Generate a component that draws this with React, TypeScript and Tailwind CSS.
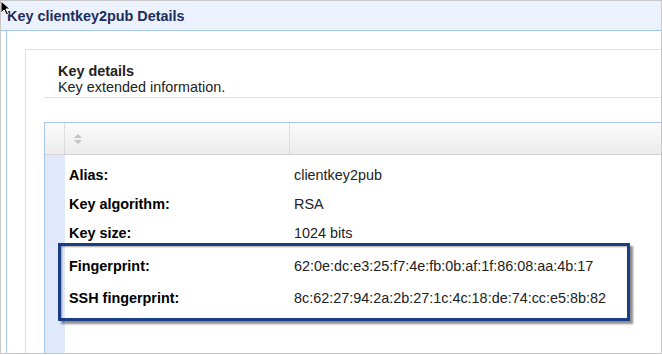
import React from "react";

const rows: { label: string; value: string; h: string }[] = [
  { label: "Alias:", value: "clientkey2pub", h: "h-[29px]" },
  { label: "Key algorithm:", value: "RSA", h: "h-[29px]" },
  { label: "Key size:", value: "1024 bits", h: "h-[33px]" },
  { label: "Fingerprint:", value: "62:0e:dc:e3:25:f7:4e:fb:0b:af:1f:86:08:aa:4b:17", h: "h-[32px]" },
  { label: "SSH fingerprint:", value: "8c:62:27:94:2a:2b:27:1c:4c:18:de:74:cc:e5:8b:82", h: "h-[32px]" },
];

export default function App() {
  return (
    <div
      className="relative w-[662px] h-[354px] overflow-hidden border border-[#c8c8c8] bg-white flex flex-col"
      style={{ fontFamily: '"Liberation Sans", Arial, sans-serif' }}
    >
      {/* header */}
      <div className="h-[30px] shrink-0 bg-[#ebf2fd] border-b border-[#a4c6f0] flex items-center pl-[6px]">
        <span className="text-[14.4px] leading-[16px] font-bold text-[#1c2d5c]">Key clientkey2pub Details</span>
      </div>

      {/* body panel */}
      <div className="flex-1 ml-[5px] border-l border-[#a9c8f0] pl-[18px] pt-[18px] flex flex-col min-h-0">
        {/* card */}
        <div className="flex-1 border-l border-t border-[#e0e0e0] pl-[18px] flex flex-col min-h-0">
          <div className="border-b border-[#e0e0e0] pl-[14px] pt-[13px] pb-[2px] text-[14.4px] leading-[16px] text-[#222]">
            <div className="font-bold">Key details</div>
            <div>Key extended information.</div>
          </div>

          {/* table */}
          <div className="relative mt-[24px] flex-1 border-t border-l border-[#a9c4eb] flex flex-col min-h-0">
            <div className="h-[32px] shrink-0 flex bg-gradient-to-b from-[#fbfbfb] to-[#ececec] border-b border-[#d4d4d4]">
              <div className="w-[20px] border-r border-dotted border-[#c8c8c8]" />
              <div className="w-[225px] border-r border-dotted border-[#c8c8c8] flex items-center pl-[9px]">
                <svg width="8" height="10" viewBox="0 0 8 10">
                  <path d="M4 0 L8 4 L0 4 Z" fill="#c4c4c4" />
                  <path d="M0 6 L8 6 L4 10 Z" fill="#c4c4c4" />
                </svg>
              </div>
              <div className="flex-1" />
            </div>
            <div className="flex-1 flex min-h-0">
              <div className="w-[20px] shrink-0 bg-[#dfe9fb]" />
              <div className="flex-1 pt-[12px] flex flex-col text-[14.4px] leading-[16px]">
                {rows.map((r) => (
                  <div key={r.label} className={`${r.h} shrink-0 flex items-start`}>
                    <div className="w-[225px] pl-[4px] font-bold text-black">{r.label}</div>
                    <div className="pl-[4px] text-[#222]">{r.value}</div>
                  </div>
                ))}
              </div>
            </div>
          </div>
        </div>
      </div>

      {/* highlight annotation */}
      <div className="absolute left-[57px] top-[242px] w-[572px] h-[78px] border-[3px] border-[#1a3e86] shadow-[3px_3px_2px_rgba(0,0,0,0.45),inset_1px_1px_2px_rgba(0,0,0,0.35)]" />

      {/* mouse cursor */}
      <svg className="absolute left-[-1px] top-[-1px]" width="12" height="16" viewBox="0 0 12 16">
        <path d="M1 1 L1 13 L4 10 L6.5 15 L8.5 14 L6 9 L10 9 Z" fill="#000" stroke="#fff" strokeWidth="1" />
      </svg>
    </div>
  );
}
